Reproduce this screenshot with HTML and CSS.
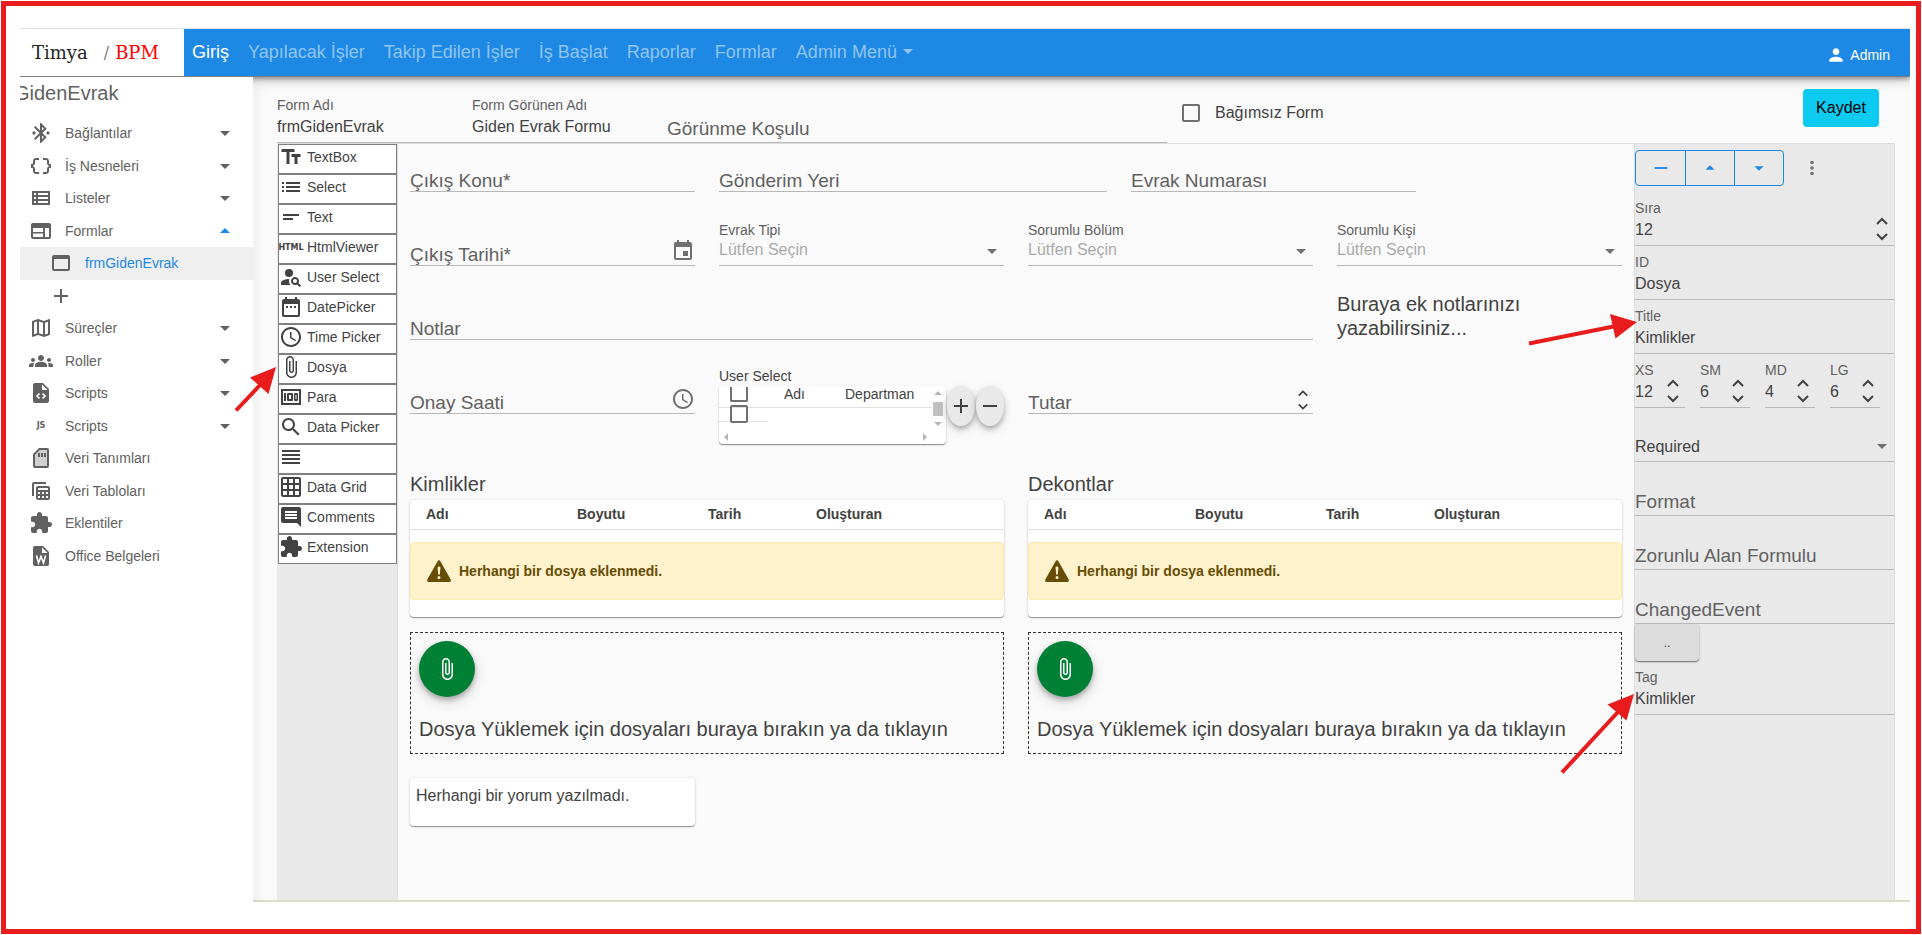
FILE: index.html
```html
<!DOCTYPE html>
<html lang="tr">
<head>
<meta charset="utf-8">
<title>Timya / BPM</title>
<link rel="stylesheet" href="styles.css">
</head>
<body>
<svg class="sprite" aria-hidden="true">
  <symbol id="i-bt" viewBox="0 0 24 24"><path d="M7 12l-2-2-2 2 2 2 2-2zm10.71-4.29L12 2h-1v7.59L6.41 5 5 6.41 10.59 12 5 17.59 6.41 19 11 14.41V22h1l5.71-5.71-4.3-4.29 4.3-4.29zM13 5.83l1.88 1.88L13 9.59V5.83zm1.88 10.46L13 18.17v-3.76l1.88 1.88zM19 10l-2 2 2 2 2-2-2-2z"/></symbol>
  <symbol id="i-braces" viewBox="0 0 24 24"><path d="M4 7v2c0 .55-.45 1-1 1H2v4h1c.55 0 1 .45 1 1v2c0 1.65 1.35 3 3 3h3v-2H7c-.55 0-1-.45-1-1v-2c0-1.3-.84-2.42-2-2.83v-.34C5.16 11.42 6 10.3 6 9V7c0-.55.45-1 1-1h3V4H7C5.35 4 4 5.35 4 7z"/><path d="M21 10c-.55 0-1-.45-1-1V7c0-1.65-1.35-3-3-3h-3v2h3c.55 0 1 .45 1 1v2c0 1.3.84 2.42 2 2.83v.34c-1.16.41-2 1.52-2 2.83v2c0 .55-.45 1-1 1h-3v2h3c1.65 0 3-1.35 3-3v-2c0-.55.45-1 1-1h1v-4h-1z"/></symbol>
  <symbol id="i-viewlist" viewBox="0 0 24 24"><path fill-rule="evenodd" d="M3 5v14h18V5H3zm2 2h2v2H5V7zm4 0h10v2H9V7zm-4 4h2v2H5v-2zm4 0h10v2H9v-2zm-4 4h2v2H5v-2zm4 0h10v2H9v-2z"/></symbol>
  <symbol id="i-web" viewBox="0 0 24 24"><path fill-rule="evenodd" d="M20 4H4a2 2 0 0 0-2 2v12a2 2 0 0 0 2 2h16a2 2 0 0 0 2-2V6a2 2 0 0 0-2-2zM4 9h10v4H4V9zm0 5.500h10V18H4v-3.500zM16 9h4v9h-4V9z"/></symbol>
  <symbol id="i-window" viewBox="0 0 24 24"><path fill-rule="evenodd" d="M19 4H5a2 2 0 0 0-2 2v12a2 2 0 0 0 2 2h14a2 2 0 0 0 2-2V6a2 2 0 0 0-2-2zm0 14H5V8h14v10z"/></symbol>
  <symbol id="i-plus" viewBox="0 0 24 24"><path d="M19 13h-6v6h-2v-6H5v-2h6V5h2v6h6v2z"/></symbol>
  <symbol id="i-minus" viewBox="0 0 24 24"><path d="M19 13H5v-2h14v2z"/></symbol>
  <symbol id="i-map" viewBox="0 0 24 24"><path d="M20.500 3l-.16.03L15 5.100 9 3 3.360 4.900c-.21.07-.36.25-.36.48V20.500c0 .28.22.5.5.5l.16-.03L9 18.900l6 2.100 5.640-1.900c.21-.07.36-.25.36-.48V3.500c0-.28-.22-.5-.5-.5zM10 5.470l4 1.400v11.660l-4-1.400V5.470zm-5 .99l3-1.010v11.700l-3 1.160V6.460zm14 11.080l-3 1.010V6.860l3-1.160v11.840z"/></symbol>
  <symbol id="i-groups" viewBox="0 0 24 24"><path d="M12 12.750c1.630 0 3.070.39 4.240.9 1.080.48 1.760 1.560 1.760 2.730V18H6v-1.610c0-1.180.68-2.260 1.760-2.730 1.170-.52 2.610-.91 4.240-.91zM4 13c1.100 0 2-.9 2-2s-.9-2-2-2-2 .9-2 2 .9 2 2 2zm1.130 1.100c-.37-.06-.74-.1-1.130-.1-.99 0-1.930.21-2.780.58C.48 14.900 0 15.620 0 16.430V18h4.500v-1.610c0-.83.23-1.610.63-2.290zM20 13c1.100 0 2-.9 2-2s-.9-2-2-2-2 .9-2 2 .9 2 2 2zm4 3.430c0-.81-.48-1.530-1.220-1.850-.85-.37-1.790-.58-2.780-.58-.39 0-.76.04-1.130.1.400.68.63 1.460.63 2.290V18H24v-1.570zM12 6c1.660 0 3 1.340 3 3s-1.340 3-3 3-3-1.340-3-3 1.340-3 3-3z"/></symbol>
  <symbol id="i-code" viewBox="0 0 24 24"><path d="M14 2H6a2 2 0 0 0-2 2v16a2 2 0 0 0 2 2h12a2 2 0 0 0 2-2V8l-6-6z"/><path d="M13 3.500V9h5.500z" fill="#fff"/><path d="M10.500 12.500L8 15l2.500 2.500M13.500 12.500L16 15l-2.500 2.500" fill="none" stroke="#fff" stroke-width="1.700"/></symbol>
  <symbol id="i-sd" viewBox="0 0 24 24"><path d="M10 3L5 8v13h14V3z" opacity=".3"/><path fill-rule="evenodd" d="M18 2h-8L4 8v12a2 2 0 0 0 2 2h12a2 2 0 0 0 2-2V4a2 2 0 0 0-2-2zm0 18H6V8.830L10.830 4H18v16z"/><path d="M9 7h2v4H9zM12 7h2v4h-2zM15 7h2v4h-2z"/></symbol>
  <symbol id="i-tables" viewBox="0 0 24 24"><path d="M3 17V5a2 2 0 0 1 2-2h12v2H5v12z"/><path fill-rule="evenodd" d="M9 7h10a2 2 0 0 1 2 2v10a2 2 0 0 1-2 2H9a2 2 0 0 1-2-2V9a2 2 0 0 1 2-2zm0 2v2h10V9zm0 4v2h2v-2zm4 0v2h2v-2zm4 0v2h2v-2zm-8 4v2h2v-2zm4 0v2h2v-2zm4 0v2h2v-2z"/></symbol>
  <symbol id="i-ext" viewBox="0 0 24 24"><path d="M20.500 11H19V7c0-1.100-.9-2-2-2h-4V3.500C13 2.120 11.880 1 10.500 1S8 2.120 8 3.500V5H4c-1.100 0-1.990.9-1.990 2v3.800H3.500c1.490 0 2.700 1.210 2.700 2.700s-1.210 2.700-2.700 2.700H2V20c0 1.100.9 2 2 2h3.800v-1.500c0-1.490 1.210-2.700 2.700-2.700 1.490 0 2.700 1.210 2.700 2.700V22H17c1.100 0 2-.9 2-2v-4h1.500c1.380 0 2.500-1.120 2.500-2.500S21.880 11 20.500 11z"/></symbol>
  <symbol id="i-word" viewBox="0 0 24 24"><path d="M14 2H6a2 2 0 0 0-2 2v16a2 2 0 0 0 2 2h12a2 2 0 0 0 2-2V8l-6-6z"/><path d="M13 3.500V9h5.500z" fill="#fff"/><path d="M7.500 11.500L9.500 19 12 12.500 14.500 19l2-7.500" fill="none" stroke="#fff" stroke-width="1.600"/></symbol>
  <symbol id="i-tt" viewBox="0 0 24 24"><path d="M2.500 4v3h5v12h3V7h5V4h-13zm19 5h-9v3h3v7h3v-7h3V9z"/></symbol>
  <symbol id="i-list" viewBox="0 0 24 24"><path d="M3 13h2v-2H3v2zm0 4h2v-2H3v2zm0-8h2V7H3v2zm4 4h14v-2H7v2zm0 4h14v-2H7v2zM7 7v2h14V7H7z"/></symbol>
  <symbol id="i-short" viewBox="0 0 24 24"><path d="M4 9h16v2H4V9zm0 4h10v2H4v-2z"/></symbol>
  <symbol id="i-usearch" viewBox="0 0 24 24"><circle cx="10" cy="8" r="4"/><path d="M10.350 14.010C7.620 13.910 2 15.270 2 18v2h9.540c-2.470-2.760-1.230-5.890-1.190-5.990zM19.430 18.020c.36-.59.57-1.280.57-2.020 0-2.210-1.790-4-4-4s-4 1.790-4 4 1.790 4 4 4c.74 0 1.430-.22 2.020-.57L20.590 22 22 20.590l-2.570-2.570zM16 18c-1.100 0-2-.9-2-2s.9-2 2-2 2 .9 2 2-.9 2-2 2z"/></symbol>
  <symbol id="i-date" viewBox="0 0 24 24"><path d="M19 4h-1V2h-2v2H8V2H6v2H5c-1.110 0-1.990.9-1.990 2L3 20c0 1.100.89 2 2 2h14c1.100 0 2-.9 2-2V6c0-1.100-.9-2-2-2zm0 16H5V9h14v11zM9 13v-2H7v2h2zm4 0v-2h-2v2h2zm4 0v-2h-2v2h2z"/></symbol>
  <symbol id="i-clock" viewBox="0 0 24 24"><path d="M11.990 2C6.470 2 2 6.480 2 12s4.470 10 9.990 10C17.520 22 22 17.520 22 12S17.520 2 11.990 2zM12 20c-4.420 0-8-3.580-8-8s3.580-8 8-8 8 3.580 8 8-3.580 8-8 8zm.5-13H11v6l5.250 3.150.75-1.230-4.500-2.670z"/></symbol>
  <symbol id="i-clip" viewBox="0 0 24 24"><path d="M16.500 6v11.500c0 2.210-1.790 4-4 4s-4-1.790-4-4V5c0-1.380 1.120-2.500 2.500-2.500s2.500 1.120 2.500 2.500v10.500c0 .55-.45 1-1 1s-1-.45-1-1V6H10v9.500c0 1.380 1.120 2.500 2.500 2.500s2.500-1.120 2.500-2.500V5c0-2.210-1.790-4-4-4S7 2.790 7 5v12.500c0 3.040 2.460 5.500 5.500 5.500s5.500-2.460 5.500-5.500V6h-1.500z"/></symbol>
  <symbol id="i-money" viewBox="0 0 24 24"><path fill-rule="evenodd" d="M2 4v16h20V4H2zm2 2h16v12H4V6z"/><path d="M5 8h2v8H5z"/><path fill-rule="evenodd" d="M9 8h4a1 1 0 0 1 1 1v6a1 1 0 0 1-1 1H9a1 1 0 0 1-1-1V9a1 1 0 0 1 1-1zm1 2v4h2v-4zM16 8h2a1 1 0 0 1 1 1v6a1 1 0 0 1-1 1h-2a1 1 0 0 1-1-1V9a1 1 0 0 1 1-1zm.5 2v4h1v-4z"/></symbol>
  <symbol id="i-search" viewBox="0 0 24 24"><path d="M15.500 14h-.79l-.28-.27C15.410 12.590 16 11.110 16 9.500 16 5.910 13.090 3 9.500 3S3 5.910 3 9.500 5.910 16 9.500 16c1.610 0 3.090-.59 4.230-1.570l.27.28v.79l5 4.990L20.490 19l-4.990-5zm-6 0C7.010 14 5 11.990 5 9.500S7.010 5 9.500 5 14 7.010 14 9.500 11.990 14 9.500 14z"/></symbol>
  <symbol id="i-lines" viewBox="0 0 24 24"><path d="M3 15h18v-2H3v2zm0 4h18v-2H3v2zm0-8h18V9H3v2zm0-6v2h18V5H3z"/></symbol>
  <symbol id="i-grid" viewBox="0 0 24 24"><path d="M20 2H4c-1.100 0-2 .9-2 2v16c0 1.100.9 2 2 2h16c1.100 0 2-.9 2-2V4c0-1.100-.9-2-2-2zM8 20H4v-4h4v4zm0-6H4v-4h4v4zm0-6H4V4h4v4zm6 12h-4v-4h4v4zm0-6h-4v-4h4v4zm0-6h-4V4h4v4zm6 12h-4v-4h4v4zm0-6h-4v-4h4v4zm0-6h-4V4h4v4z"/></symbol>
  <symbol id="i-comment" viewBox="0 0 24 24"><path d="M21.990 4c0-1.100-.89-2-1.990-2H4c-1.100 0-2 .9-2 2v12c0 1.100.9 2 2 2h14l4 4-.01-18zM18 14H6v-2h12v2zm0-3H6V9h12v2zm0-3H6V6h12v2z"/></symbol>
  <symbol id="i-event" viewBox="0 0 24 24"><path d="M17 12h-5v5h5v-5zM16 1v2H8V1H6v2H5c-1.110 0-1.990.9-1.990 2L3 19c0 1.100.89 2 2 2h14c1.100 0 2-.9 2-2V5c0-1.100-.9-2-2-2h-1V1h-2zm3 18H5V8h14v11z"/></symbol>
  <symbol id="i-person" viewBox="0 0 24 24"><path d="M12 12c2.210 0 4-1.790 4-4s-1.790-4-4-4-4 1.790-4 4 1.790 4 4 4zm0 2c-2.670 0-8 1.340-8 4v2h16v-2c0-2.660-5.330-4-8-4z"/></symbol>
  <symbol id="i-down" viewBox="0 0 24 24"><path d="M7 10l5 5 5-5z"/></symbol>
  <symbol id="i-up" viewBox="0 0 24 24"><path d="M7 14l5-5 5 5z"/></symbol>
  <symbol id="i-more" viewBox="0 0 24 24"><circle cx="12" cy="6" r="2"/><circle cx="12" cy="12" r="2"/><circle cx="12" cy="18" r="2"/></symbol>
  <symbol id="i-spin" viewBox="0 0 14 24"><path d="M2 7l5-5 5 5M2 17l5 5 5-5" fill="none" stroke="currentColor" stroke-width="2"/></symbol>
  <symbol id="i-warn" viewBox="0 0 24 24"><path fill-rule="evenodd" d="M13.400 2.200a1.600 1.600 0 0 0-2.800 0L.3 20.400C-.3 21.500.4 23 1.700 23h20.600c1.300 0 2-1.500 1.400-2.600zM12 7.500c.9 0 1.500.7 1.400 1.600l-.5 5.700a.9.900 0 0 1-1.800 0l-.5-5.700c-.1-.9.5-1.600 1.400-1.600zm0 9.500a1.500 1.500 0 1 1 0 3 1.500 1.500 0 0 1 0-3z"/></symbol>
</svg>

<div class="frame">
  <header class="topbar">
    <a class="brand" href="#"><span class="brand-name">Timya</span><span class="brand-sep">/</span><span class="brand-bpm">BPM</span></a>
    <nav class="nav">
      <a class="active" href="#">Giriş</a>
      <a href="#">Yapılacak İşler</a>
      <a href="#">Takip Edilen İşler</a>
      <a href="#">İş Başlat</a>
      <a href="#">Raporlar</a>
      <a href="#">Formlar</a>
      <a class="has-caret" href="#">Admin Menü</a>
    </nav>
    <a class="user" href="#"><svg class="icon"><use href="#i-person"/></svg>Admin</a>
  </header>

  <div class="body">
    <aside class="side">
      <div class="side-title">GidenEvrak</div>
      <nav class="side-nav">
        <a href="#"><svg class="icon"><use href="#i-bt"/></svg>Bağlantılar<svg class="icon end"><use href="#i-down"/></svg></a>
        <a href="#"><svg class="icon"><use href="#i-braces"/></svg>İş Nesneleri<svg class="icon end"><use href="#i-down"/></svg></a>
        <a href="#"><svg class="icon"><use href="#i-viewlist"/></svg>Listeler<svg class="icon end"><use href="#i-down"/></svg></a>
        <a href="#"><svg class="icon"><use href="#i-web"/></svg>Formlar<svg class="icon end open"><use href="#i-up"/></svg></a>
        <a class="sub current" href="#"><svg class="icon"><use href="#i-window"/></svg>frmGidenEvrak</a>
        <a class="sub" href="#" aria-label="Ekle"><svg class="icon"><use href="#i-plus"/></svg></a>
        <a href="#"><svg class="icon"><use href="#i-map"/></svg>Süreçler<svg class="icon end"><use href="#i-down"/></svg></a>
        <a href="#"><svg class="icon"><use href="#i-groups"/></svg>Roller<svg class="icon end"><use href="#i-down"/></svg></a>
        <a href="#"><svg class="icon"><use href="#i-code"/></svg>Scripts<svg class="icon end"><use href="#i-down"/></svg></a>
        <a href="#"><span class="word-icon">JS</span>Scripts<svg class="icon end"><use href="#i-down"/></svg></a>
        <a href="#"><svg class="icon"><use href="#i-sd"/></svg>Veri Tanımları</a>
        <a href="#"><svg class="icon"><use href="#i-tables"/></svg>Veri Tabloları</a>
        <a href="#"><svg class="icon"><use href="#i-ext"/></svg>Eklentiler</a>
        <a href="#"><svg class="icon"><use href="#i-word"/></svg>Office Belgeleri</a>
      </nav>
    </aside>

    <main class="main">
      <div class="form-head">
        <div class="field name"><label for="fa">Form Adı</label><input id="fa" type="text" value="frmGidenEvrak"></div>
        <div class="field name"><label for="fg">Form Görünen Adı</label><input id="fg" type="text" value="Giden Evrak Formu"></div>
        <div class="field empty cond"><label for="fk">Görünme Koşulu</label><input id="fk" type="text"></div>
        <label class="check"><input type="checkbox">Bağımsız Form</label>
        <button class="save" type="button">Kaydet</button>
      </div>

      <div class="designer">
        <div class="toolbox">
          <button type="button"><svg class="icon"><use href="#i-tt"/></svg>TextBox</button>
          <button type="button"><svg class="icon"><use href="#i-list"/></svg>Select</button>
          <button type="button"><svg class="icon"><use href="#i-short"/></svg>Text</button>
          <button type="button"><span class="word-icon">HTML</span>HtmlViewer</button>
          <button type="button"><svg class="icon"><use href="#i-usearch"/></svg>User Select</button>
          <button type="button"><svg class="icon"><use href="#i-date"/></svg>DatePicker</button>
          <button type="button"><svg class="icon"><use href="#i-clock"/></svg>Time Picker</button>
          <button type="button"><svg class="icon"><use href="#i-clip"/></svg>Dosya</button>
          <button type="button"><svg class="icon"><use href="#i-money"/></svg>Para</button>
          <button type="button"><svg class="icon"><use href="#i-search"/></svg>Data Picker</button>
          <button type="button" aria-label="Ayırıcı"><svg class="icon"><use href="#i-lines"/></svg></button>
          <button type="button"><svg class="icon"><use href="#i-grid"/></svg>Data Grid</button>
          <button type="button"><svg class="icon"><use href="#i-comment"/></svg>Comments</button>
          <button type="button"><svg class="icon"><use href="#i-ext"/></svg>Extension</button>
        </div>

        <div class="canvas">
          <div class="field empty w3"><label for="c1">Çıkış Konu*</label><input id="c1" type="text"></div>
          <div class="field empty w4"><label for="c2">Gönderim Yeri</label><input id="c2" type="text"></div>
          <div class="field empty w3"><label for="c3">Evrak Numarası</label><input id="c3" type="text"></div>

          <div class="field empty w3 row-start"><label for="c4">Çıkış Tarihi*</label><input id="c4" type="text"><svg class="icon adorn"><use href="#i-event"/></svg></div>
          <div class="field w3"><label for="c5">Evrak Tipi</label><select id="c5"><option>Lütfen Seçin</option></select><svg class="icon adorn"><use href="#i-down"/></svg></div>
          <div class="field w3"><label for="c6">Sorumlu Bölüm</label><select id="c6"><option>Lütfen Seçin</option></select><svg class="icon adorn"><use href="#i-down"/></svg></div>
          <div class="field w3"><label for="c7">Sorumlu Kişi</label><select id="c7"><option>Lütfen Seçin</option></select><svg class="icon adorn"><use href="#i-down"/></svg></div>

          <div class="field empty w9"><label for="c8">Notlar</label><input id="c8" type="text"></div>
          <p class="note w3">Buraya ek notlarınızı yazabilirsiniz...</p>

          <div class="field empty w3"><label for="c9">Onay Saati</label><input id="c9" type="text"><svg class="icon adorn"><use href="#i-clock"/></svg></div>
          <div class="users w3">
            <div class="users-title">User Select</div>
            <div class="users-row">
              <div class="users-card">
                <div class="users-view">
                  <div class="users-head"><input type="checkbox" aria-label="Tümünü seç"><span>Adı</span><span>Departman</span></div>
                  <div class="users-line"><input type="checkbox" aria-label="Satırı seç"></div>
                </div>
                <div class="vbar"><i class="tri up"></i><i class="thumb"></i><i class="tri down"></i></div>
                <div class="hbar"><i class="tri left"></i><i class="tri right"></i></div>
              </div>
              <button class="pill" type="button" aria-label="Ekle"><svg class="icon"><use href="#i-plus"/></svg></button>
              <button class="pill" type="button" aria-label="Çıkar"><svg class="icon"><use href="#i-minus"/></svg></button>
            </div>
          </div>
          <div class="field empty w3"><label for="c10">Tutar</label><input id="c10" type="number"><svg class="spin small"><use href="#i-spin"/></svg></div>

          <section class="files w6 row-start">
            <h2>Kimlikler</h2>
            <table>
              <thead><tr><th>Adı</th><th>Boyutu</th><th>Tarih</th><th>Oluşturan</th></tr></thead>
              <tbody><tr><td colspan="4"><div class="alert"><svg class="icon"><use href="#i-warn"/></svg>Herhangi bir dosya eklenmedi.</div></td></tr></tbody>
            </table>
            <div class="drop"><button class="fab" type="button" aria-label="Dosya ekle"><svg class="icon"><use href="#i-clip"/></svg></button><p>Dosya Yüklemek için dosyaları buraya bırakın ya da tıklayın</p></div>
          </section>
          <section class="files w6">
            <h2>Dekontlar</h2>
            <table>
              <thead><tr><th>Adı</th><th>Boyutu</th><th>Tarih</th><th>Oluşturan</th></tr></thead>
              <tbody><tr><td colspan="4"><div class="alert"><svg class="icon"><use href="#i-warn"/></svg>Herhangi bir dosya eklenmedi.</div></td></tr></tbody>
            </table>
            <div class="drop"><button class="fab" type="button" aria-label="Dosya ekle"><svg class="icon"><use href="#i-clip"/></svg></button><p>Dosya Yüklemek için dosyaları buraya bırakın ya da tıklayın</p></div>
          </section>

          <div class="comments w3">Herhangi bir yorum yazılmadı.</div>
        </div>

        <div class="props">
          <div class="props-actions">
            <div class="group">
              <button type="button" aria-label="Kaldır"><svg class="icon"><use href="#i-minus"/></svg></button>
              <button type="button" aria-label="Yukarı"><svg class="icon"><use href="#i-up"/></svg></button>
              <button type="button" aria-label="Aşağı"><svg class="icon"><use href="#i-down"/></svg></button>
            </div>
            <button class="more" type="button" aria-label="Diğer"><svg class="icon"><use href="#i-more"/></svg></button>
          </div>
          <div class="field"><label for="p1">Sıra</label><input id="p1" type="number" value="12"><svg class="spin"><use href="#i-spin"/></svg></div>
          <div class="field"><label for="p2">ID</label><input id="p2" type="text" value="Dosya"></div>
          <div class="field"><label for="p3">Title</label><input id="p3" type="text" value="Kimlikler"></div>
          <div class="sizes">
            <div class="field"><label for="s1">XS</label><input id="s1" type="number" value="12"><svg class="spin"><use href="#i-spin"/></svg></div>
            <div class="field"><label for="s2">SM</label><input id="s2" type="number" value="6"><svg class="spin"><use href="#i-spin"/></svg></div>
            <div class="field"><label for="s3">MD</label><input id="s3" type="number" value="4"><svg class="spin"><use href="#i-spin"/></svg></div>
            <div class="field"><label for="s4">LG</label><input id="s4" type="number" value="6"><svg class="spin"><use href="#i-spin"/></svg></div>
          </div>
          <div class="field"><select aria-label="Required"><option>Required</option></select><svg class="icon adorn"><use href="#i-down"/></svg></div>
          <div class="field empty"><label for="p5">Format</label><input id="p5" type="text"></div>
          <div class="field empty"><label for="p6">Zorunlu Alan Formulu</label><input id="p6" type="text"></div>
          <div class="field empty"><label for="p7">ChangedEvent</label><input id="p7" type="text"></div>
          <button class="dots" type="button">..</button>
          <div class="field"><label for="p8">Tag</label><input id="p8" type="text" value="Kimlikler"></div>
        </div>
      </div>
    </main>
  </div>
</div>

<svg class="pointers" aria-hidden="true">
  <g stroke="#e81c1c" stroke-width="4" fill="#e81c1c">
    <path d="M236 410.500L262 383M1529 343.500L1616 326M1562 772.500L1618 712"/>
    <path stroke="none" d="M276 367L250 377.500 268.500 394zM1637 322L1610 314 1615.500 338.500zM1634 694L1607.500 704.500 1626.500 720.500z"/>
  </g>
</svg>
</body>
</html>
```
FILE: styles.css
```css
* { box-sizing: border-box; }

body {
  margin: 0;
  background: #fff;
  color: #424242;
  font-family: "Liberation Sans", Arial, sans-serif;
  font-size: 14px;
  position: relative;
}

a { color: inherit; text-decoration: none; }
button, input, select { font: inherit; color: inherit; margin: 0; }
p, h2 { margin: 0; font-weight: 400; }

.sprite { position: absolute; width: 0; height: 0; }
.icon { width: 24px; height: 24px; fill: currentColor; flex: none; }
.word-icon {
  display: flex;
  justify-content: center;
  width: 24px;
  flex: none;
  font-family: "DejaVu Sans", sans-serif;
  font-size: 8px;
  font-weight: 700;
}

.frame {
  display: flex;
  flex-direction: column;
  min-height: calc(100vh - 2px);
  margin: 1px;
  padding: 22px 6px 27px 14px;
  border: 5px solid #e81c1c;
}

/* Top bar */
.topbar {
  display: flex;
  align-items: stretch;
  height: 49px;
  border-top: 1px solid #e0e0ea;
  border-bottom: 1px solid #808080;
  background: #1e88e5;
  color: #fff;
  position: relative;
  z-index: 1;
  box-shadow: 0 2px 4px rgba(0, 0, 0, .3), 0 4px 10px rgba(0, 0, 0, .2);
  clip-path: inset(0 0 -20px 0);
}
.brand {
  display: flex;
  align-items: center;
  width: 164px;
  padding-left: 12px;
  background: #fff;
  color: #222;
  font-family: "DejaVu Serif", serif;
  font-size: 18px;
}
.brand-sep { margin: 0 6px 0 16px; color: #777; font-size: 16px; }
.brand-bpm { color: #f00; }
.nav {
  display: flex;
  align-items: center;
  gap: 19px;
  padding-left: 8px;
  font-size: 18px;
  color: #90c5f3;
}
.nav .active { color: #fff; }
.has-caret::after {
  content: "";
  display: inline-block;
  margin-left: 6px;
  vertical-align: 4px;
  border: 5px solid transparent;
  border-top-color: currentColor;
  border-bottom: 0;
}
.user {
  display: flex;
  align-items: center;
  gap: 4px;
  margin-left: auto;
  padding: 5px 20px 0 0;
}
.user .icon { width: 20px; height: 20px; }

/* Sidebar */
.body { display: flex; flex: 1; }
.side {
  width: 233px;
  flex: none;
  background: #fff;
  color: #616161;
  position: relative;
  z-index: 2;
  box-shadow: 6px 4px 10px rgba(0, 0, 0, .04);
  clip-path: inset(0 -20px 0 0);
}
.side-title {
  height: 40px;
  overflow: hidden;
  font-size: 20px;
  line-height: 32px;
  text-indent: -6px;
}
.side-nav {
  display: grid;
  grid-auto-rows: 1fr;
  min-height: 455px;
}
.side-nav a {
  display: flex;
  align-items: center;
  gap: 12px;
  padding: 0 16px 0 9px;
}
.side-nav .end { margin-left: auto; }
.side-nav .open { color: #1e88e5; }
.side-nav .sub { padding-left: 29px; }
.side-nav .current { background: #efefef; color: #1e88e5; }
.side-nav .current .icon { color: #616161; }

/* Fields */
.field {
  position: relative;
  display: flex;
  flex-direction: column;
  justify-content: flex-end;
  min-width: 0;
  min-height: 54px;
  padding-bottom: 4px;
  border-bottom: 1px solid #b8b8b8;
}
.field label { line-height: 22px; color: #616161; }
.field input, .field select {
  width: 100%;
  height: 22px;
  padding: 0;
  border: 0;
  outline: 0;
  background: none;
  appearance: none;
  font-size: 16px;
}
input[type="number"] { appearance: textfield; }
.empty {
  display: grid;
  grid-template-columns: minmax(0, 1fr);
  justify-content: stretch;
  align-content: end;
  padding-bottom: 2px;
}
.empty label { grid-area: 1 / 1; font-size: 19px; white-space: nowrap; }
.empty input { grid-area: 1 / 1; }
.adorn { position: absolute; right: 0; bottom: 2px; color: #707070; }
.spin { position: absolute; right: 5px; bottom: 4px; width: 14px; height: 24px; }
.spin.small { right: 4px; bottom: 2px; width: 12px; height: 22px; }

input[type="checkbox"] {
  width: 18px;
  height: 18px;
  flex: none;
  border: 2px solid #707070;
  border-radius: 2px;
  background: none;
  appearance: none;
}

/* Form header */
.main {
  display: flex;
  flex-direction: column;
  flex: 1;
  min-width: 0;
  padding: 0 15px 0 24px;
  background: #fafafa;
  border-bottom: 2px solid #dcdcc8;
}
.form-head { display: flex; align-items: stretch; height: 66px; }
.name { width: 195px; }
.cond { width: 500px; }
.check {
  display: flex;
  align-items: center;
  gap: 15px;
  padding: 6px 0 0 15px;
  font-size: 16px;
}
.save {
  align-self: flex-start;
  width: 76px;
  height: 38px;
  margin: 12px 16px 0 auto;
  border: 0;
  border-radius: 4px;
  background: #0dcaf0;
  color: #000;
  font-size: 16px;
}

/* Designer */
.designer {
  display: grid;
  grid-template-columns: 121px minmax(0, 1fr) 261px;
  flex: 1;
  border-top: 1px solid #ddd;
}
.toolbox { padding-left: 1px; background: #e9e9e9; border-right: 1px solid #ddd; }
.toolbox button {
  display: flex;
  align-items: center;
  gap: 4px;
  width: 100%;
  height: 30px;
  padding: 0 0 4px;
  border: 1px solid #808080;
  background: #fff;
  text-align: left;
}

.canvas {
  display: grid;
  grid-template-columns: repeat(12, minmax(0, 1fr));
  grid-template-rows: 48px 50px 50px auto auto auto;
  align-content: start;
  align-items: start;
  gap: 24px;
  padding: 0 12px;
}
.w3 { grid-column: span 3; }
.w4 { grid-column: span 4; }
.w6 { grid-column: span 6; }
.w9 { grid-column: span 9; }
.row-start.w3 { grid-column: 1 / span 3; }
.row-start.w6 { grid-column: 1 / span 6; }
.canvas .field { height: 50px; min-height: 48px; max-height: 100%; padding-bottom: 5px; }
.canvas .field label { line-height: 16px; }
.canvas .empty { padding-bottom: 0; }
.canvas .empty label { line-height: 20px; }
.canvas .empty input { height: 20px; }
.canvas select { color: #aaa; }
.note { padding-top: 2px; font-size: 20px; line-height: 24px; }

.users-title { padding-top: 2px; line-height: 20px; }
.users-row { display: flex; gap: 1px; }
.users-card {
  display: grid;
  grid-template-columns: 1fr 14px;
  grid-template-rows: 43px 15px;
  flex: 1;
  overflow: hidden;
  border-radius: 4px;
  background: #fff;
  box-shadow: 0 1px 1px rgba(0, 0, 0, .4), 0 1px 3px rgba(0, 0, 0, .1);
}
.users-view { overflow: hidden; }
.users-head {
  display: grid;
  grid-template-columns: 18px 62px 1fr;
  align-items: end;
  height: 22px;
  padding: 0 0 6px 11px;
  border-bottom: 1px solid #e0e0e0;
}
.users-head input { height: 15px; border-top: 0; border-radius: 0 0 2px 2px; }
.users-head span { padding-left: 35px; line-height: 16px; }
.users-head span:nth-child(2) { padding-left: 36px; }
.users-line { display: flex; align-items: flex-end; width: 48px; height: 14px; padding-left: 11px; border-bottom: 1px solid #e0e0e0; }
.users-line input { margin-bottom: -2px; }
.vbar { display: flex; flex-direction: column; align-items: center; justify-content: space-between; padding: 5px 2px 3px 0; }
.hbar { display: flex; align-items: center; justify-content: space-between; padding: 0 5px; }
.thumb { width: 10px; height: 14px; background: #c1c1c1; }
.tri { border: 4px solid transparent; }
.up { border-top: 0; border-bottom-color: #b5b5b5; }
.down { border-bottom: 0; border-top-color: #b5b5b5; }
.left { border-left: 0; border-right-color: #b5b5b5; }
.right { border-right: 0; border-left-color: #b5b5b5; }
.pill {
  display: flex;
  align-items: center;
  justify-content: center;
  width: 28px;
  height: 40px;
  padding: 0;
  border: 0;
  border-radius: 50%;
  background: #e9e9e9;
  box-shadow: 0 3px 5px rgba(0, 0, 0, .25), 0 4px 12px rgba(0, 0, 0, .12);
}

.files { padding-top: 2px; }
.files h2 { font-size: 20px; line-height: 28px; }
.files table {
  width: 100%;
  margin: 2px 0 15px;
  border-spacing: 0;
  table-layout: fixed;
  border-radius: 4px;
  background: #fff;
  box-shadow: 0 1px 1px rgba(0, 0, 0, .4), 0 0 3px rgba(0, 0, 0, .12);
}
.files th {
  height: 30px;
  padding: 0 0 2px 16px;
  border-bottom: 1px solid #e0e0e0;
  text-align: left;
}
.files th:nth-child(1) { width: 151px; }
.files th:nth-child(2) { width: 131px; }
.files th:nth-child(3) { width: 108px; }
.files td { padding: 12px 0 17px; }
.alert {
  display: flex;
  align-items: center;
  gap: 8px;
  height: 58px;
  padding-left: 16px;
  border: 1px solid #ffe9a8;
  border-radius: 4px;
  background: #fff2cd;
  color: #664d03;
  font-weight: 700;
}
.drop { height: 122px; padding: 8px; border: 1px dashed #333; }
.drop p { margin-top: 20px; font-size: 20px; line-height: 24px; }
.fab {
  display: flex;
  align-items: center;
  justify-content: center;
  width: 56px;
  height: 56px;
  border: 0;
  border-radius: 50%;
  background: #008035;
  color: #fff;
  box-shadow: 0 3px 5px rgba(0, 0, 0, .25), 0 5px 14px rgba(0, 0, 0, .15);
}
.comments {
  min-height: 48px;
  padding: 8px 6px;
  border-radius: 4px;
  background: #fff;
  font-size: 16px;
  line-height: 20px;
  box-shadow: 0 1px 1px rgba(0, 0, 0, .4), 0 0 3px rgba(0, 0, 0, .12);
}

/* Properties */
.props {
  padding: 6px 0 0;
  background: #e9e9e9;
  border: 1px solid #ddd;
  border-width: 0 1px;
}
.props-actions { display: flex; align-items: center; gap: 17px; margin-bottom: 6px; }
.group { display: flex; border: 1px solid #1e88e5; border-radius: 4px; }
.group button {
  display: flex;
  align-items: center;
  justify-content: center;
  width: 49px;
  height: 34px;
  padding: 0;
  border: 0;
  background: none;
  color: #1e88e5;
}
.group button + button { border-left: 1px solid #1e88e5; }
.group .icon, .more .icon { width: 22px; height: 22px; }
.more { display: flex; padding: 0; border: 0; background: none; color: #707070; }
.props .icon.adorn { bottom: 3px; }
.sizes { display: grid; grid-template-columns: repeat(4, 50px); gap: 15px; }
.dots {
  display: block;
  width: 64px;
  height: 37px;
  border: 0;
  border-radius: 4px;
  background: #dcdcdc;
  font-size: 12px;
  box-shadow: 0 1px 1px rgba(0, 0, 0, .4), 0 1px 3px rgba(0, 0, 0, .2);
}

/* Red pointer arrows over the page */
.pointers {
  position: absolute;
  top: 0;
  left: 0;
  width: 100%;
  height: 100%;
  z-index: 3;
  pointer-events: none;
}
```
